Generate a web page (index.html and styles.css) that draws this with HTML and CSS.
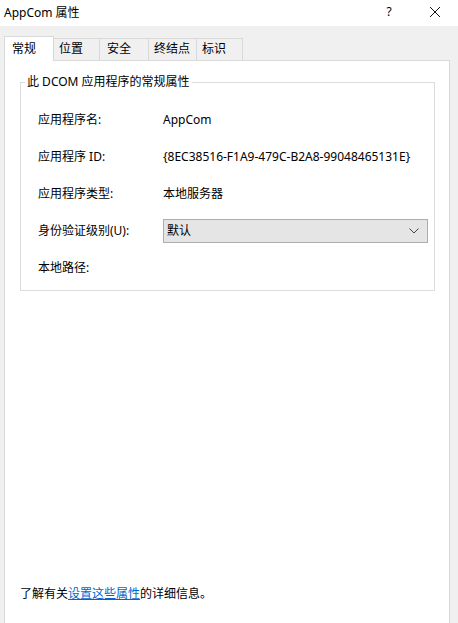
FILE: index.html
```html
<!DOCTYPE html>
<html lang="zh-CN">
<head>
  <meta charset="UTF-8" />
  <title>AppCom 属性</title>
  <link rel="stylesheet" href="styles.css">
</head>
<body>
  <div class="window">
    <div class="titlebar">
      <span class="title">AppCom 属性</span>
      <span class="tbtn">?</span>
      <span class="tbtn close">
        <svg width="12" height="12" viewBox="0 0 12 12"><path d="M1 1L11 11M11 1L1 11" stroke="#111" stroke-width="1" fill="none"/></svg>
      </span>
    </div>

    <div class="content">
      <div class="tabs">
        <div class="tab active t1">常规</div>
        <div class="tab t2">位置</div>
        <div class="tab t3">安全</div>
        <div class="tab t4">终结点</div>
        <div class="tab t5">标识</div>
      </div>

      <div class="panel">
        <fieldset class="group">
          <legend>此 DCOM 应用程序的常规属性</legend>
          <div class="rows">
            <div class="label">应用程序名:</div>
            <div class="value">AppCom</div>
            <div class="label">应用程序 ID:</div>
            <div class="value">{8EC38516-F1A9-479C-B2A8-99048465131E}</div>
            <div class="label">应用程序类型:</div>
            <div class="value">本地服务器</div>
            <div class="label">身份验证级别(U):</div>
            <div class="value">
              <div class="combo">
                <span>默认</span>
                <svg width="10" height="6" viewBox="0 0 10 6"><path d="M0.5 0.5L5 5L9.5 0.5" stroke="#444" stroke-width="1" fill="none"/></svg>
              </div>
            </div>
            <div class="label">本地路径:</div>
            <div class="value"></div>
          </div>
        </fieldset>

        <p class="footer">了解有关<a href="#">设置这些属性</a>的详细信息。</p>
      </div>
    </div>
  </div>
</body>
</html>
```

FILE: styles.css
```css
* {
  box-sizing: border-box;
}
html, body {
  margin: 0;
  padding: 0;
}
body {
  font-family: "Noto Sans", "Noto Sans CJK SC", sans-serif;
  font-size: 12px;
  color: #000;
  background: #f0f0f0;
}
.window {
  width: 458px;
  height: 623px;
  display: flex;
  flex-direction: column;
  overflow: hidden;
}
.titlebar {
  height: 26px;
  background: #fff;
  display: flex;
  align-items: center;
  padding-left: 4px;
}
.title {
  flex: 1;
  font-size: 12px;
  margin-top: -3px;
}
.tbtn {
  width: 46px;
  height: 26px;
  display: flex;
  align-items: center;
  justify-content: center;
  font-size: 12px;
  margin-top: -3px;
}
.close svg {
  display: block;
}
.content {
  flex: 1;
  display: flex;
  flex-direction: column;
  padding: 0 8px 0 4px;
}
.tabs {
  height: 34px;
  display: flex;
  align-items: flex-end;
}
.tab {
  height: 22px;
  line-height: 20px;
  padding-left: 5px;
  border: 1px solid #d9d9d9;
  border-bottom: none;
  border-left: none;
  background: #f0f0f0;
  margin-bottom: 0;
}
.tab.active {
  height: 25px;
  line-height: 24px;
  background: #fff;
  border-left: 1px solid #d9d9d9;
  margin-bottom: -1px;
  padding-left: 7px;
  position: relative;
  z-index: 1;
}
.t1 { width: 50px; }
.t2 { width: 46px; }
.t3 { width: 49px; padding-left: 7px; }
.t4 { width: 48px; }
.t5 { width: 46px; }
.panel {
  flex: 1;
  background: #fff;
  border: 1px solid #d9d9d9;
  border-bottom: none;
  display: flex;
  flex-direction: column;
  padding: 13px 14px 0 15px;
}
.group {
  margin: 0;
  padding: 11px 6px 4px 17px;
  border: 1px solid #dcdcdc;
  min-width: 0;
}
.group legend {
  padding: 0 2px;
  margin-left: -13px;
  line-height: 16px;
}
.rows {
  display: grid;
  grid-template-columns: 125px 1fr;
  grid-auto-rows: 37px;
  align-items: center;
}
.label, .value {
  line-height: 16px;
}
.combo {
  height: 24px;
  background: #e5e5e5;
  border: 1px solid #adadad;
  display: flex;
  align-items: center;
  justify-content: space-between;
  padding: 0 8px 0 3px;
}
.footer {
  margin: auto 0 0 0;
  padding: 0 0 21px 0;
  line-height: 16px;
}
.footer a {
  color: #0066cc;
  text-decoration: underline;
}
```
